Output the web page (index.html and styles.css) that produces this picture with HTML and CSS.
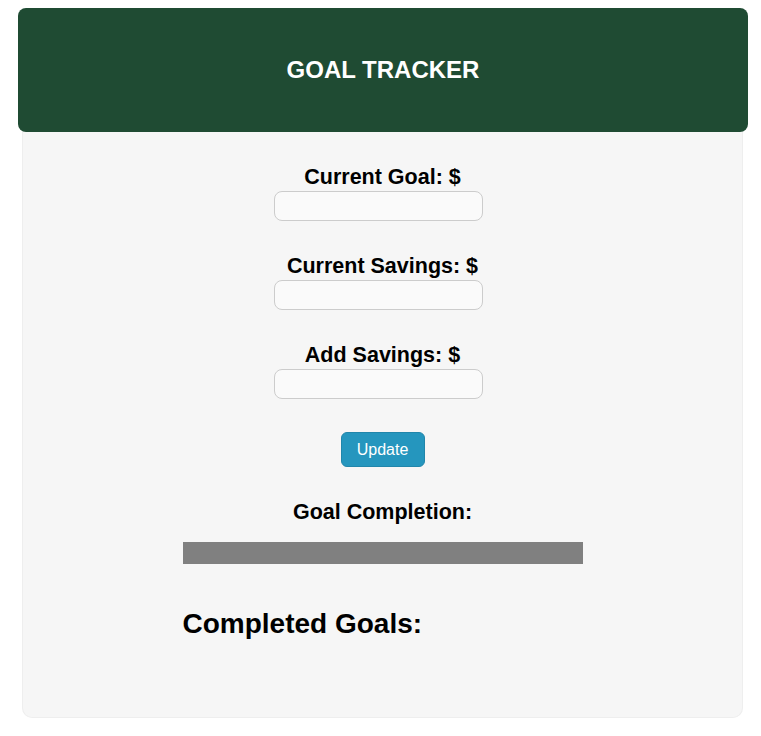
FILE: index.html
```html
<!DOCTYPE html>
<html>
<head>
<meta charset="utf-8">
<title>Goal Tracker</title>
<link rel="stylesheet" href="styles.css">
</head>
<body>
<div class="app">
  <header class="header">
    <h1 class="title">GOAL TRACKER</h1>
  </header>
  <main class="card">
    <div class="field">
      <label class="label" for="goal">Current Goal: $</label>
      <input class="input" id="goal" type="text">
    </div>
    <div class="field">
      <label class="label" for="savings">Current Savings: $</label>
      <input class="input" id="savings" type="text">
    </div>
    <div class="field">
      <label class="label" for="add">Add Savings: $</label>
      <input class="input" id="add" type="text">
    </div>
    <button class="button" type="button">Update</button>
    <div class="completion">Goal Completion:</div>
    <div class="bar"><div class="bar-fill" style="width:0%"></div></div>
    <section class="completed">
      <h2 class="completed-title">Completed Goals:</h2>
    </section>
  </main>
</div>
</body>
</html>
```
FILE: styles.css
```css
html, body {
  background: #ffffff;
}
body {
  margin: 8px 13px 0 18px;
  font-family: "Liberation Sans", Arial, sans-serif;
  color: #000;
}
.app {
  display: flex;
  flex-direction: column;
}
.header {
  background: #1f4b33;
  border-radius: 8px;
  height: 124px;
  display: flex;
  align-items: center;
  justify-content: center;
  position: relative;
  z-index: 1;
}
.title {
  margin: 0;
  color: #ffffff;
  font-size: 24px;
  font-weight: bold;
  line-height: 28px;
}
.card {
  margin: 0 5px 0 4px;
  background: #f6f6f6;
  border: 1px solid #eeeeee;
  border-top: none;
  border-radius: 0 0 10px 10px;
  height: 586px;
  box-sizing: border-box;
  padding-top: 33px;
  display: flex;
  flex-direction: column;
  align-items: center;
}
.field {
  display: flex;
  flex-direction: column;
  align-items: center;
  margin-bottom: 33px;
}
.label {
  font-size: 21.5px;
  font-weight: bold;
  line-height: 25px;
  margin-bottom: 1px;
}
.input {
  width: 209px;
  height: 30px;
  box-sizing: border-box;
  border: 1px solid #cccccc;
  border-radius: 8px;
  background: #fafafa;
  margin-right: 8px;
  padding: 4px 8px;
  font-family: inherit;
  font-size: 16px;
}
.button {
  width: 84px;
  height: 35px;
  background: #2596be;
  color: #ffffff;
  border: 1px solid #2186ab;
  border-radius: 6px;
  font-family: inherit;
  font-size: 16px;
  padding: 0;
  margin-bottom: 33px;
}
.completion {
  font-size: 21.5px;
  font-weight: bold;
  line-height: 24px;
  margin-bottom: 18px;
}
.bar {
  width: 400px;
  height: 22px;
  background: #808080;
}
.bar-fill {
  height: 100%;
  background: #2596be;
}
.completed {
  width: 400px;
  margin-top: 44px;
}
.completed-title {
  margin: 0;
  font-size: 28px;
  font-weight: bold;
  line-height: 32px;
}
```
